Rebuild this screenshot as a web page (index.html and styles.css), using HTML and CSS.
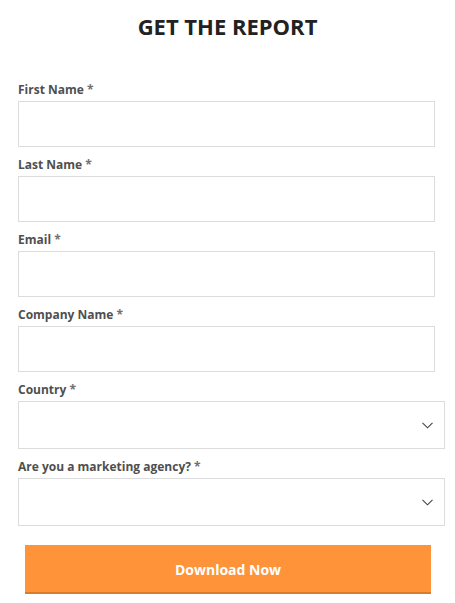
FILE: index.html
```html
<!DOCTYPE html>
<html lang="en">
<head>
<meta charset="utf-8">
<title>Get the report</title>
<link rel="stylesheet" href="styles.css">
</head>
<body>
<div class="page">
  <h1 class="title">GET THE REPORT</h1>
  <form class="form">
    <div class="field">
      <label class="label">First Name <span class="req">*</span></label>
      <input class="input" type="text">
    </div>
    <div class="field">
      <label class="label">Last Name <span class="req">*</span></label>
      <input class="input" type="text">
    </div>
    <div class="field">
      <label class="label">Email <span class="req">*</span></label>
      <input class="input" type="email">
    </div>
    <div class="field">
      <label class="label">Company Name <span class="req">*</span></label>
      <input class="input" type="text">
    </div>
    <div class="field">
      <label class="label">Country <span class="req">*</span></label>
      <div class="select">
        <svg class="chevron" width="11" height="7" viewBox="0 0 11 7"><path d="M0.5 0.8 L5.5 5.8 L10.5 0.8" fill="none" stroke="#444" stroke-width="1.1"/></svg>
      </div>
    </div>
    <div class="field">
      <label class="label">Are you a marketing agency? <span class="req">*</span></label>
      <div class="select">
        <svg class="chevron" width="11" height="7" viewBox="0 0 11 7"><path d="M0.5 0.8 L5.5 5.8 L10.5 0.8" fill="none" stroke="#444" stroke-width="1.1"/></svg>
      </div>
    </div>
    <div class="actions">
      <button class="button" type="button">Download Now</button>
    </div>
  </form>
</div>
</body>
</html>
```

FILE: styles.css
```css
html, body {
  margin: 0;
  padding: 0;
  background: #ffffff;
}
body {
  font-family: "Open Sans", "Liberation Sans", sans-serif;
  color: #4d4d4d;
}
.page {
  width: 455px;
}
.title {
  margin: 0;
  padding-top: 11px;
  font-size: 22px;
  line-height: 30px;
  font-weight: 700;
  color: #222222;
  text-align: center;
}
.form {
  display: flex;
  flex-direction: column;
  padding: 40px 0 0 18px;
}
.field {
  display: flex;
  flex-direction: column;
  gap: 3px;
  margin-bottom: 9px;
}
.label {
  font-size: 12px;
  line-height: 17px;
  font-weight: 700;
  color: #4f4f4f;
}
.req {
  color: #707070;
}
.input {
  box-sizing: border-box;
  width: 417px;
  height: 46px;
  margin: 0;
  border: 1px solid #dcdcdc;
  border-radius: 0;
  background: #fff;
  outline: none;
}
.select {
  box-sizing: border-box;
  width: 427px;
  height: 48px;
  border: 1px solid #dcdcdc;
  display: flex;
  align-items: center;
  justify-content: flex-end;
  padding-right: 11px;
}
.chevron {
  display: block;
}
.actions {
  padding: 10px 0 0 7px;
}
.button {
  box-sizing: border-box;
  width: 406px;
  height: 49px;
  margin: 0;
  border: none;
  border-bottom: 2px solid #d97b2c;
  background: #ff9339;
  color: #ffffff;
  font-family: "Open Sans", "Liberation Sans", sans-serif;
  font-size: 14px;
  font-weight: 700;
  padding: 2px 0 0;
  cursor: pointer;
}
```
